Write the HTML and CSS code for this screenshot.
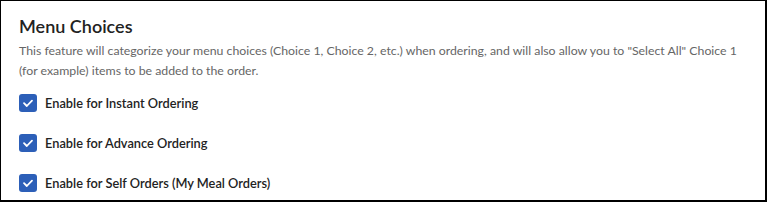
FILE: index.html
```html
<!DOCTYPE html>
<html>
<head>
<meta charset="utf-8">
<link rel="stylesheet" href="styles.css">
</head>
<body>
<div class="panel">
  <h2 class="title">Menu Choices</h2>
  <p class="desc">This feature will categorize your menu choices (Choice 1, Choice 2, etc.) when ordering, and will also allow you to "Select All" Choice 1 (for example) items to be added to the order.</p>
  <div class="options">
    <label class="option"><span class="box"><svg viewBox="0 0 18 18" width="18" height="18"><path d="M5 9.2l2.8 2.8L13 6.6" fill="none" stroke="#fff" stroke-width="1.8" stroke-linecap="round" stroke-linejoin="round"/></svg></span><span class="label">Enable for Instant Ordering</span></label>
    <label class="option"><span class="box"><svg viewBox="0 0 18 18" width="18" height="18"><path d="M5 9.2l2.8 2.8L13 6.6" fill="none" stroke="#fff" stroke-width="1.8" stroke-linecap="round" stroke-linejoin="round"/></svg></span><span class="label">Enable for Advance Ordering</span></label>
    <label class="option"><span class="box"><svg viewBox="0 0 18 18" width="18" height="18"><path d="M5 9.2l2.8 2.8L13 6.6" fill="none" stroke="#fff" stroke-width="1.8" stroke-linecap="round" stroke-linejoin="round"/></svg></span><span class="label">Enable for Self Orders (My Meal Orders)</span></label>
  </div>
</div>
</body>
</html>
```

FILE: styles.css
```css
html, body {
  margin: 0;
  padding: 0;
  background: #fff;
}
.panel {
  box-sizing: border-box;
  width: 767px;
  height: 202px;
  border: 1px solid #000;
  border-right-width: 2px;
  border-bottom-width: 2px;
  padding: 12px 18px 0 18px;
  font-family: Lato, "Open Sans", sans-serif;
  overflow: hidden;
}
.title {
  margin: 0;
  font-size: 18px;
  font-weight: 600;
  color: #222;
  line-height: 26px;
}
.desc {
  margin: 2px 0 0 0;
  font-size: 12.3px;
  line-height: 20px;
  color: #666;
}
.options {
  display: flex;
  flex-direction: column;
  gap: 22px;
  margin-top: 13px;
}
.option {
  display: flex;
  align-items: center;
  gap: 8px;
  height: 18px;
}
.box {
  width: 18px;
  height: 18px;
  border-radius: 3px;
  background: #2c5fb8;
  display: flex;
}
.label {
  font-size: 12.8px;
  font-weight: 600;
  color: #222;
}
```
